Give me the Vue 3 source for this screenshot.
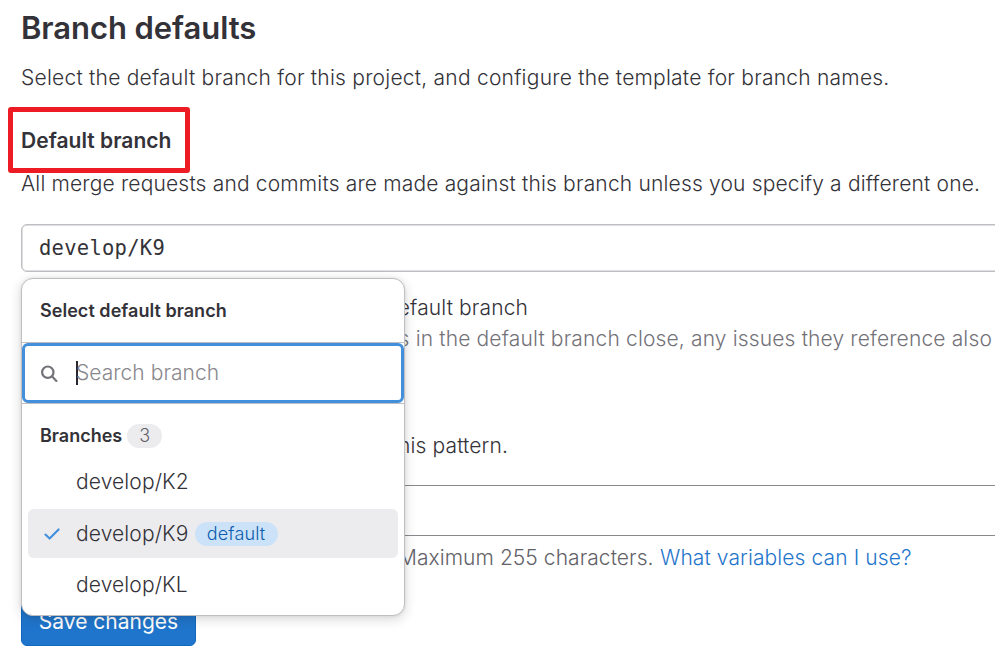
<script setup>
import { ref } from 'vue'

const selected = ref('develop/K9')
const branches = ['develop/K2', 'develop/K9', 'develop/KL']
</script>

<template>
  <main class="page">
    <h4 class="title">Branch defaults</h4>
    <p class="lead">Select the default branch for this project, and configure the template for branch names.</p>
    <div class="label-row">
      <label class="label">Default branch</label>
      <span class="highlight"></span>
    </div>
    <p class="hint">All merge requests and commits are made against this branch unless you specify a different one.</p>

    <div class="picker">
      <button class="toggle">{{ selected }}</button>
      <section class="panel">
        <header class="panel-head">Select default branch</header>
        <div class="search">
          <svg class="search-icon" viewBox="0 0 18 18" fill="none" stroke="#737278" stroke-width="2.2">
            <circle cx="7.8" cy="7.2" r="5.7" />
            <path d="M11.9 11.3 16.4 15.9" stroke-linecap="round" />
          </svg>
          <span class="caret"></span>
          <span class="placeholder">Search branch</span>
        </div>
        <div class="group"><span class="group-name">Branches</span><span class="count">{{ branches.length }}</span></div>
        <ul class="list">
          <li v-for="b in branches" :key="b" class="item" :class="{ active: b === selected }">
            <span class="check">
              <svg v-if="b === selected" viewBox="0 0 18 14" fill="none" stroke="#428fdc" stroke-width="2.1" stroke-linecap="round" stroke-linejoin="round">
                <path d="M2.4 7.6 6.6 11.6 15.6 2.4" />
              </svg>
            </span>
            <span class="name">{{ b }}</span>
            <span v-if="b === selected" class="badge">default</span>
          </li>
        </ul>
      </section>
    </div>

    <p class="auto-close">default branch</p>
    <p class="auto-help">commits in the default branch close, any issues they reference also</p>
    <p class="pattern">this pattern.</p>
    <div class="template-input"></div>
    <p class="template-help"><span class="limit">Maximum 255 characters.</span><a class="link">What variables can I use?</a></p>
    <button class="save">Save changes</button>
  </main>
</template>

<style>
body {
  background: #fff;
}
</style>

<style scoped>
.page {
  box-sizing: border-box;
  width: 995px;
  height: 656px;
  overflow: hidden;
  padding-left: 21px;
  display: flex;
  flex-direction: column;
  align-items: flex-start;
  font-family: Inter, 'Liberation Sans', sans-serif;
  font-size: 21px;
  font-weight: 360;
  letter-spacing: 0.12px;
  line-height: 32px;
  color: #333238;
}
p, h4, ul {
  margin: 0;
  padding: 0;
  list-style: none;
  white-space: nowrap;
}
p {
  flex: none;
}
.title {
  margin-top: 8px;
  font-size: 31px;
  line-height: 40px;
  font-weight: 600;
  letter-spacing: -0.07px;
}
.lead {
  margin-top: 14px;
  letter-spacing: 0.23px;
}
.label-row {
  position: relative;
  margin-top: 31px;
}
.label {
  font-weight: 600;
  letter-spacing: 0.03px;
}
.highlight {
  position: absolute;
  left: -13px;
  top: -18px;
  box-sizing: border-box;
  width: 182px;
  height: 66px;
  border: 5px solid #ed1c24;
  border-radius: 3px;
}
.hint {
  margin-top: 11px;
  letter-spacing: 0.17px;
}
.picker {
  position: relative;
  margin-top: 24px;
  flex: none;
}
.toggle {
  display: block;
  box-sizing: border-box;
  width: 1010px;
  height: 48px;
  padding: 0 17px;
  border: 1px solid #bfbfc3;
  box-shadow: inset 0 0 0 0.5px #bfbfc3;
  border-radius: 6px;
  background: #fff;
  text-align: left;
  font-family: 'DejaVu Sans Mono', monospace;
  font-size: 20.5px;
  letter-spacing: 0.26px;
  color: #333238;
}
.panel {
  position: absolute;
  z-index: 2;
  left: 0;
  top: 54px;
  box-sizing: border-box;
  width: 384px;
  height: 338px;
  border: 1px solid #bfbfc3;
  border-radius: 12px;
  background: #fff;
  box-shadow: 0 3px 12px rgba(31, 30, 36, 0.18), 0 0 3px rgba(31, 30, 36, 0.1);
}
.panel-head {
  box-sizing: border-box;
  height: 63px;
  padding-left: 18px;
  line-height: 63px;
  font-size: 18px;
  font-weight: 600;
  letter-spacing: 0.04px;
}
.search {
  box-sizing: border-box;
  height: 62px;
  border-top: 1px solid #bfbfc3;
  border-bottom: 1px solid #bfbfc3;
  padding-left: 18px;
  display: flex;
  align-items: center;
  position: relative;
}
.search::before {
  content: '';
  position: absolute;
  inset: 0;
  border: 3px solid #428fdc;
  border-radius: 6px;
}
.search-icon {
  width: 18px;
  height: 18px;
  margin-top: 1px;
}
.caret {
  width: 2px;
  height: 24px;
  margin-left: 18px;
  background: #28272d;
}
.placeholder {
  color: #89888d;
  margin-left: -2px;
  letter-spacing: 0.05px;
}
.group {
  display: flex;
  align-items: center;
  height: 64px;
  padding-left: 18px;
}
.group-name {
  font-size: 18px;
  font-weight: 600;
  letter-spacing: 0;
}
.count, .badge {
  box-sizing: border-box;
  height: 24px;
  line-height: 24px;
  border-radius: 12px;
  font-size: 18px;
  text-align: center;
}
.count {
  width: 35px;
  margin-left: 5px;
  background: #ececef;
  color: #626168;
}
.list {
  display: flex;
  flex-direction: column;
  gap: 2.5px;
  padding: 0 6px;
  margin-top: -10.5px;
}
.item {
  display: flex;
  align-items: center;
  height: 49px;
  border-radius: 6px;
}
.item.active {
  background: #ececef;
}
.check {
  display: flex;
  width: 48px;
  box-sizing: border-box;
  padding-left: 15px;
}
.check svg {
  width: 18px;
  height: 14px;
}
.badge {
  width: 83px;
  margin-left: 6px;
  background: #cbe2f9;
  color: #0b5cad;
}
.auto-close, .auto-help, .pattern {
  display: flex;
  justify-content: flex-end;
}
.auto-close {
  width: 507px;
  margin-top: 20px;
}
.auto-help {
  width: 971px;
  margin-top: -1px;
  letter-spacing: 0.15px;
  color: #737278;
}
.pattern {
  width: 487px;
  margin-top: 75px;
}
.template-input {
  box-sizing: border-box;
  flex: none;
  width: 1010px;
  height: 51px;
  margin-top: 23px;
  border: 1px solid #89888d;
  border-radius: 6px;
}
.template-help {
  margin-top: 6px;
  display: flex;
}
.limit {
  width: 639px;
  box-sizing: border-box;
  padding-left: 377px;
  color: #626168;
  letter-spacing: 0.06px;
}
.link {
  color: #1f75cb;
  letter-spacing: 0.1px;
}
.save {
  box-sizing: border-box;
  flex: none;
  height: 48px;
  width: 175px;
  margin-top: 24px;
  border: 1px solid #1068bf;
  border-radius: 6px;
  background: #1f75cb;
  color: #fff;
  font-family: inherit;
  font-size: 21px;
  padding: 0 0 2px;
}
</style>
